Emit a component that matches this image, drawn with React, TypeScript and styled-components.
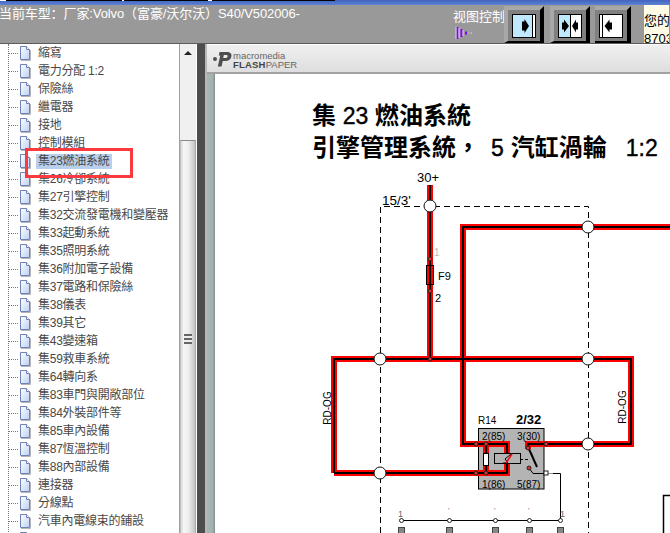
import React from 'react';
import styled, { createGlobalStyle } from 'styled-components';

const GlobalStyle = createGlobalStyle`
  html, body {
    margin: 0;
    width: 670px;
    height: 533px;
    overflow: hidden;
    background: #fff;
    font-family: "Liberation Sans", "Noto Sans CJK TC", sans-serif;
  }
`;

const Shell = styled.div`
  width: 670px;
  height: 533px;
  display: flex;
  flex-direction: column;
  overflow: hidden;
`;

const WindowEdge = styled.div`
  height: 5px;
  flex: none;
  background:
    linear-gradient(90deg, #fff 0 6px, #000 6px 122px, #fff 122px 124px, #000 124px 208px, #fff 208px 212px, #000 212px 335px, transparent 335px) top / 100% 1px no-repeat,
    linear-gradient(180deg, #3f63c0, #5f82d2);
`;

const TopBar = styled.div`
  height: 38px;
  flex: none;
  display: flex;
  align-items: flex-start;
  background: #999;
  border-bottom: 1px solid #5c5c5c;
`;

const CarModel = styled.div`
  width: 454px;
  flex: none;
  margin-left: -1px;
  padding-top: 1px;
  font: 13px/15px "Liberation Sans", "Noto Sans CJK SC", sans-serif;
  letter-spacing: -0.1px;
  color: #fff;
  white-space: nowrap;
`;

const ControlBlock = styled.div`
  width: 52px;
  flex: none;
  display: flex;
  flex-direction: column;
  align-items: flex-start;
  padding-top: 3px;
`;

const ControlLabel = styled.div`
  font: 13px/16px "Noto Sans CJK SC", sans-serif;
  color: #fff;
  white-space: nowrap;
`;

const ButtonRow = styled.div`
  display: flex;
  flex: none;
  margin-top: 1px;
  margin-left: -1px;
`;

const ViewButton = styled.div<{ $flush?: boolean }>`
  box-sizing: border-box;
  height: 37px;
  width: ${props => (props.$flush ? '36px' : '40px')};
  margin-right: ${props => (props.$flush ? '0' : '6px')};
  margin-left: ${props => (props.$flush ? '-1px' : '0')};
  padding: 4px 4px 3px;
  background: #808080;
  border-style: solid;
  border-width: 4px 4px 2px ${props => (props.$flush ? '0' : '4px')};
  border-color: #a8a8a8 #000 #000 #a8a8a8;

  svg {
    display: block;
  }
`;

const QuotaNote = styled.div`
  width: 25px;
  height: 38px;
  flex: none;
  margin-left: 13px;
  overflow: hidden;
  background: #fffbe6;
  color: #000;
  font: 13px/18px "Liberation Sans", "Noto Sans CJK SC", sans-serif;
  white-space: nowrap;
  padding-top: 7px;
  box-sizing: border-box;
`;

const Body = styled.div`
  flex: 1;
  min-height: 0;
  display: flex;
`;

const TreePane = styled.div`
  position: relative;
  width: 179px;
  flex: none;
  overflow: hidden;
  background: #fff;
  border-right: 1px solid #a0a0a0;
`;

const TreeList = styled.ul`
  list-style: none;
  margin: 0 0 0 8px;
  padding: 0;
  border-left: 1px dotted #777;
`;

const TreeRow = styled.li`
  height: 18px;
  display: flex;
  align-items: center;
`;

const Connector = styled.span`
  width: 9px;
  flex: none;
  border-top: 1px dotted #777;
`;

const RowLabel = styled.span<{ $selected?: boolean }>`
  margin-left: 5px;
  padding: 0 2px;
  font-size: 12px;
  line-height: 15px;
  letter-spacing: -0.25px;
  white-space: nowrap;
  color: #484848;
  background: ${props => (props.$selected ? '#b9cfeb' : 'transparent')};
`;

const Callout = styled.div`
  position: absolute;
  left: 25px;
  top: 104px;
  width: 108px;
  height: 30px;
  box-sizing: border-box;
  border: 3px solid #fb3a3f;
`;

const ScrollTrack = styled.div`
  width: 17px;
  flex: none;
  box-sizing: border-box;
  padding-top: 96px;
  display: flex;
  flex-direction: column;
  position: relative;
  background: #f0f0f0;
  border-right: 1px solid #fff;
`;

const ScrollArrow = styled.span`
  position: absolute;
  top: 7px;
  left: 4px;
  width: 0;
  height: 0;
  border-left: 4px solid transparent;
  border-right: 4px solid transparent;
  border-bottom: 4px solid #222;
`;

const ScrollThumb = styled.div`
  height: 396px;
  flex: none;
  display: flex;
  align-items: center;
  justify-content: center;
  background: linear-gradient(90deg, #d8d8d8, #f6f6f6 20%, #ececec 55%, #c4c4c4);
  border-top: 1px solid #8a8a8a;
  border-left: 1px solid #c0c0c0;
  border-right: 1px solid #a8a8a8;
`;

const Grip = styled.div`
  width: 8px;
  height: 10px;
  background: repeating-linear-gradient(180deg, #666 0 2px, #eee 2px 4px);
`;

const Splitter = styled.div`
  width: 8px;
  flex: none;
  background: #4d4d4d;
  border-right: 2px solid #b4baba;
`;

const Viewer = styled.div`
  flex: 1;
  min-width: 0;
  display: flex;
  flex-direction: column;
`;

const ViewerHeader = styled.div`
  height: 27px;
  flex: none;
  display: flex;
  align-items: center;
  gap: 1px;
  padding-left: 5px;
  background: linear-gradient(180deg, #f0f0f0, #dedede);
  border-top: 1px solid #fff;
  border-bottom: 2px solid #a2a2a2;
`;

const LogoText = styled.div`
  color: #666;
  font-size: 9.5px;
  line-height: 9px;
  padding-top: 3px;
  white-space: nowrap;
`;

const LogoStrong = styled.strong`
  color: #444;
  letter-spacing: 0.2px;
`;

const DocRow = styled.div`
  flex: 1;
  min-height: 0;
  display: flex;
`;

const DocGutter = styled.div`
  width: 8px;
  flex: none;
  background: linear-gradient(90deg, #a9b6b5, #a3b1af 70%, #7f8d8b);
`;

const DocPage = styled.div`
  flex: 1;
  min-width: 0;
  overflow: hidden;
  background: #fff;
  padding: 26px 0 0 85px;
`;

const DocTitle = styled.h1`
  height: 31.5px;
  margin: 0 0 0 12px;
  font: bold 24px/31.5px "Liberation Sans", "Noto Sans CJK TC", sans-serif;
  color: #000;
  white-space: nowrap;
`;

const TitleFigure = styled.span<{ $gap?: number }>`
  margin-left: ${props => props.$gap ?? 0}px;
  font-weight: normal;
  font-size: 23px;
  -webkit-text-stroke: 0.4px #000;
`;

const TitleWords = styled.span<{ $gap?: number }>`
  margin-left: ${props => props.$gap ?? 0}px;
`;

const Diagram = styled.svg`
  display: block;
  width: 370px;
  height: 370px;
`;

const treeItems = [
  '縮寫', '電力分配 1:2', '保險絲', '繼電器', '接地', '控制模組',
  '集23燃油系統', '集26冷卻系統', '集27引擎控制', '集32交流發電機和變壓器',
  '集33起動系統', '集35照明系統', '集36附加電子設備', '集37電路和保險絲',
  '集38儀表', '集39其它', '集43變速箱', '集59救車系統', '集64轉向系',
  '集83車門與開敞部位', '集84外裝部件等', '集85車內設備', '集87恆溫控制',
  '集88內部設備', '連接器', '分線點', '汽車內電線束的鋪設', '',
];

const FileIcon = () => (
  <svg width="13" height="16" viewBox="0 0 13 16" style={{ flex: 'none' }}>
    <defs>
      <linearGradient id="sheet" x1="0" y1="0" x2="1" y2="1">
        <stop offset="0" stopColor="#ffffff" />
        <stop offset="1" stopColor="#bcd0f2" />
      </linearGradient>
    </defs>
    <path d="M2.5 1.5H8.5L11.5 4.5V14.5H2.5Z" fill="url(#sheet)" stroke="#6f82b4" />
    <path d="M8.5 1.5V4.5H11.5" fill="#fff" stroke="#6f82b4" />
    <path d="M3 15.5H12.5V5" fill="none" stroke="#b4b4bc" />
  </svg>
);

const FlashLogo = () => (
  <svg width="20" height="18" viewBox="0 0 20 18">
    <path d="M7.500 2H15C19 2 20 4.500 19.300 7C18.600 9.800 16.300 11 13.500 11H10.800L9.500 16.500H5.800L8.300 5.500H6.800Z" fill="#4e4e4e" />
    <path d="M11.800 5L11.200 8H13.800C15.800 8 16.500 5 14.500 5Z" fill="#ececec" />
    <circle cx="3" cy="9" r="2" fill="#4e4e4e" />
  </svg>
);

const FacePanel = ({ mode }: { mode: 'left' | 'both' | 'right' }) => (
  <svg width="24" height="24" viewBox="0 0 24 24">
    <rect x="0.500" y="0.500" width="23" height="23" fill="#fff" stroke="#000" />
    {mode === 'left' && <rect x="1" y="1" width="19" height="22" fill="#bfe9ff" />}
    {mode === 'left' && <path d="M20.500 1V23" stroke="#000" />}
    {mode === 'left' && <path d="M11 7.500H13.500V5L18 12L13.500 19V16.500H11Z" fill="#000" transform="translate(-1 0)" />}
    {mode === 'both' && <rect x="1" y="1" width="11" height="22" fill="#bfe9ff" />}
    {mode === 'both' && <path d="M12.500 1V23" stroke="#000" />}
    {mode === 'both' && <path d="M4 8.500H6V5.500L11 12L6 18.500V15.500H4Z" fill="#000" />}
    {mode === 'both' && <path d="M20 8.500H18V5.500L14 12L18 18.500V15.500H20Z" fill="#000" />}
    {mode === 'right' && <path d="M3.500 1V23" stroke="#000" />}
    {mode === 'right' && <path d="M13 8.500H10.500V5.500L5.500 12L10.500 18.500V15.500H13Z" fill="#000" />}
  </svg>
);

const Waveform = () => (
  <svg width="18" height="14" viewBox="0 0 18 14" style={{ display: 'block', margin: '2px 0 0 2px' }}>
    <path d="M2.500 1V13" stroke="#8a00ff" strokeWidth="2" />
    <path d="M6.500 3V11" stroke="#8a00ff" strokeWidth="2" />
    <path d="M11 5.500V8.500" stroke="#8a00ff" strokeWidth="2" />
    <path d="M1 1V13M4 2V12M8 4V10" stroke="#e6ddf2" strokeWidth="0.800" />
    <path d="M13.500 7H14.500M16 7H17" stroke="#e8e8e8" />
  </svg>
);

const wires = [
  '430,185 430,359',
  '334,473 334,359 631,359 631,444 528,444 528,449',
  '334,473 507,473 507,444 476,444 463,444 463,227 670,227',
  '486,444 486,473',
];

const hubs: [number, number][] = [
  [430, 206], [588, 227], [380, 359], [588, 359], [380, 473], [588, 444],
];

const pins: [number, number][] = [
  [430, 259], [430, 291], [430, 359], [476, 444], [476, 473], [486, 444], [486, 473],
  [528, 448], [529, 468], [546, 444],
];

const busPins = [401, 449, 495, 529, 560];

const Schematic = () => (
  <Diagram viewBox="300 163 370 370" fontFamily="Liberation Sans, sans-serif">
    <g fill="none" stroke="#000" strokeDasharray="6 4">
      <path d="M380.500 533V206.500H588.500V533" />
    </g>
    <rect x="478.500" y="428.500" width="65.500" height="60.500" fill="#b4b4b4" stroke="#000" />
    <g fill="none" strokeLinejoin="miter">
      {wires.map(points => (
        <polyline key={`red-${points}`} points={points} stroke="#ff0000" strokeWidth="6" />
      ))}
      {wires.map(points => (
        <polyline key={`core-${points}`} points={points} stroke="#000" strokeWidth="2" />
      ))}
    </g>
    <rect x="426.500" y="265.500" width="7" height="19" fill="none" stroke="#000" />
    <rect x="483.500" y="453.500" width="5" height="12" fill="#fff" stroke="#000" />
    <rect x="494.500" y="453.500" width="26" height="10" fill="#b4b4b4" stroke="#000" />
    <path d="M503 463H508L505 459L511 454" fill="none" stroke="#000" />
    <path d="M506 463L512 454" stroke="#ff0000" strokeWidth="1.500" />
    <path d="M520 459.500H530" stroke="#000" strokeDasharray="3 2" />
    <path d="M529 449L537 467" stroke="#000" strokeWidth="2" />
    <path d="M529 468L533 473.500H546" fill="none" stroke="#000" />
    <path d="M546 473.500H553" stroke="#999" />
    <path d="M553 473.500H560.500V520.500H401" fill="none" stroke="#000" />
    <path d="M663.500 533V495.500H670" fill="none" stroke="#000" strokeWidth="1.500" />
    {hubs.map(([x, y]) => (
      <circle key={`${x}-${y}`} cx={x} cy={y} r="6" fill="#fff" stroke="#111" />
    ))}
    {pins.map(([x, y]) => (
      <circle key={`${x}-${y}`} cx={x} cy={y} r="2" fill="#e03030" stroke="#222" />
    ))}
    <rect x="544" y="471" width="4" height="4" fill="#fff" stroke="#222" />
    {busPins.map(x => (
      <g key={x}>
        <circle cx={x + 0.5} cy={520.5} r="2" fill="#fff" stroke="#222" />
        <rect x={x - 2.5} y="527.500" width="6" height="6" fill="#888" stroke="#444" />
      </g>
    ))}
    <text x="417" y="182" fontSize="13">30+</text>
    <text x="382" y="205" fontSize="13.500">15/3'</text>
    <text x="434" y="256" fontSize="10" fill="#bbb">1</text>
    <text x="438" y="280" fontSize="11">F9</text>
    <text x="435" y="302" fontSize="11">2</text>
    <text x="331" y="408" fontSize="10" textAnchor="middle" transform="rotate(-90 331 408)">RD-OG</text>
    <text x="626" y="407" fontSize="10" textAnchor="middle" transform="rotate(-90 626 407)">RD-OG</text>
    <text x="478" y="424" fontSize="10">R14</text>
    <text x="516" y="424" fontSize="13" fontWeight="bold">2/32</text>
    <text x="482" y="440" fontSize="10">2(85)</text>
    <text x="517" y="440" fontSize="10">3(30)</text>
    <text x="482" y="488" fontSize="10">1(86)</text>
    <text x="517" y="488" fontSize="10">5(87)</text>
    <text x="398" y="517" fontSize="9" fill="#666">1</text>
    <text x="448" y="513" fontSize="8" fill="#666">'</text>
    <text x="494" y="513" fontSize="8" fill="#666">'</text>
    <text x="528" y="513" fontSize="8" fill="#666">'</text>
    <text x="560" y="517" fontSize="9" fill="#666">1</text>
  </Diagram>
);

const App: React.FC = () => (
  <Shell>
    <GlobalStyle />
    <WindowEdge />
    <TopBar>
      <CarModel>当前车型：厂家:Volvo（富豪/沃尔沃）S40/V502006-</CarModel>
      <ControlBlock>
        <ControlLabel>视图控制</ControlLabel>
        <Waveform />
      </ControlBlock>
      <ButtonRow>
        <ViewButton><FacePanel mode="left" /></ViewButton>
        <ViewButton><FacePanel mode="both" /></ViewButton>
        <ViewButton $flush><FacePanel mode="right" /></ViewButton>
      </ButtonRow>
      <QuotaNote>您的<br />8703</QuotaNote>
    </TopBar>
    <Body>
      <TreePane>
        <TreeList>
          {treeItems.map((item, index) => (
            <TreeRow key={index}>
              <Connector />
              <FileIcon />
              {item && <RowLabel $selected={item === '集23燃油系統'}>{item}</RowLabel>}
            </TreeRow>
          ))}
        </TreeList>
        <Callout />
      </TreePane>
      <ScrollTrack>
        <ScrollArrow />
        <ScrollThumb><Grip /></ScrollThumb>
      </ScrollTrack>
      <Splitter />
      <Viewer>
        <ViewerHeader>
          <FlashLogo />
          <LogoText>
            macromedia<br />
            <LogoStrong>FLASH</LogoStrong>PAPER
          </LogoText>
        </ViewerHeader>
        <DocRow>
          <DocGutter />
          <DocPage>
            <DocTitle>
              集 <TitleFigure>23</TitleFigure> 燃油系統
            </DocTitle>
            <DocTitle>
              引擎管理系統，
              <TitleFigure $gap={11}>5</TitleFigure>
              <TitleWords $gap={7}>汽缸渦輪</TitleWords>
              <TitleFigure $gap={19}>1:2</TitleFigure>
            </DocTitle>
            <Schematic />
          </DocPage>
        </DocRow>
      </Viewer>
    </Body>
  </Shell>
);

export default App;
